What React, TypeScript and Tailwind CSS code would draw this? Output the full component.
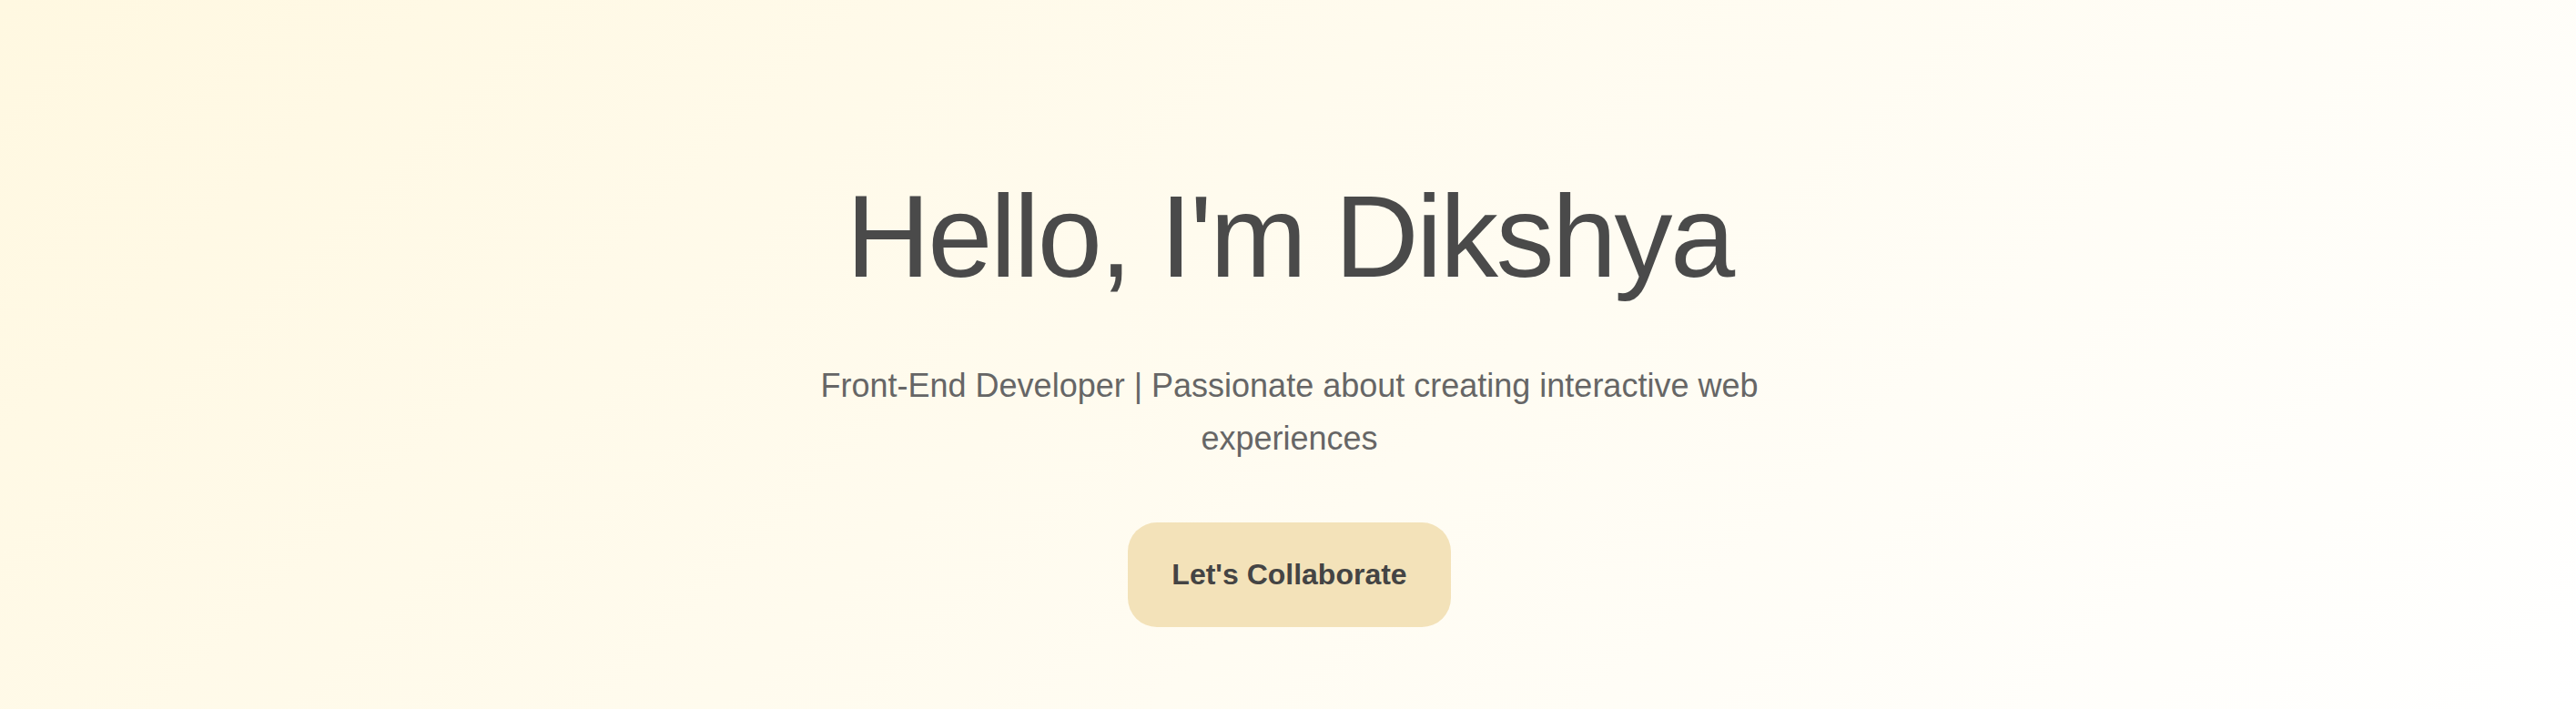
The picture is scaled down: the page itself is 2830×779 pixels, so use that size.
import React from "react";

export default function App() {
  return (
    <div
      className="w-full min-h-[779px] bg-[linear-gradient(135deg,#fff8e1_0%,#ffffff_100%)] flex flex-col items-center pt-[186px] pl-[3px] text-center"
      style={{ fontFamily: '"Liberation Sans", Arial, sans-serif' }}
    >
      <h1 className="text-[128px] leading-[1.15] font-normal text-[#4a4a4a] tracking-[-0.02em] mb-[62px]">
        Hello, I'm Dikshya
      </h1>
      <p className="text-[36px] leading-[1.6] text-[#666666] max-w-[1100px] mb-[64px]">
        Front-End Developer | Passionate about creating interactive web experiences
      </p>
      <button className="bg-[#f3e2b9] text-[#444444] text-[32px] font-bold px-[48px] py-[39px] leading-[1.15] rounded-[32px]">
        Let's Collaborate
      </button>
    </div>
  );
}
